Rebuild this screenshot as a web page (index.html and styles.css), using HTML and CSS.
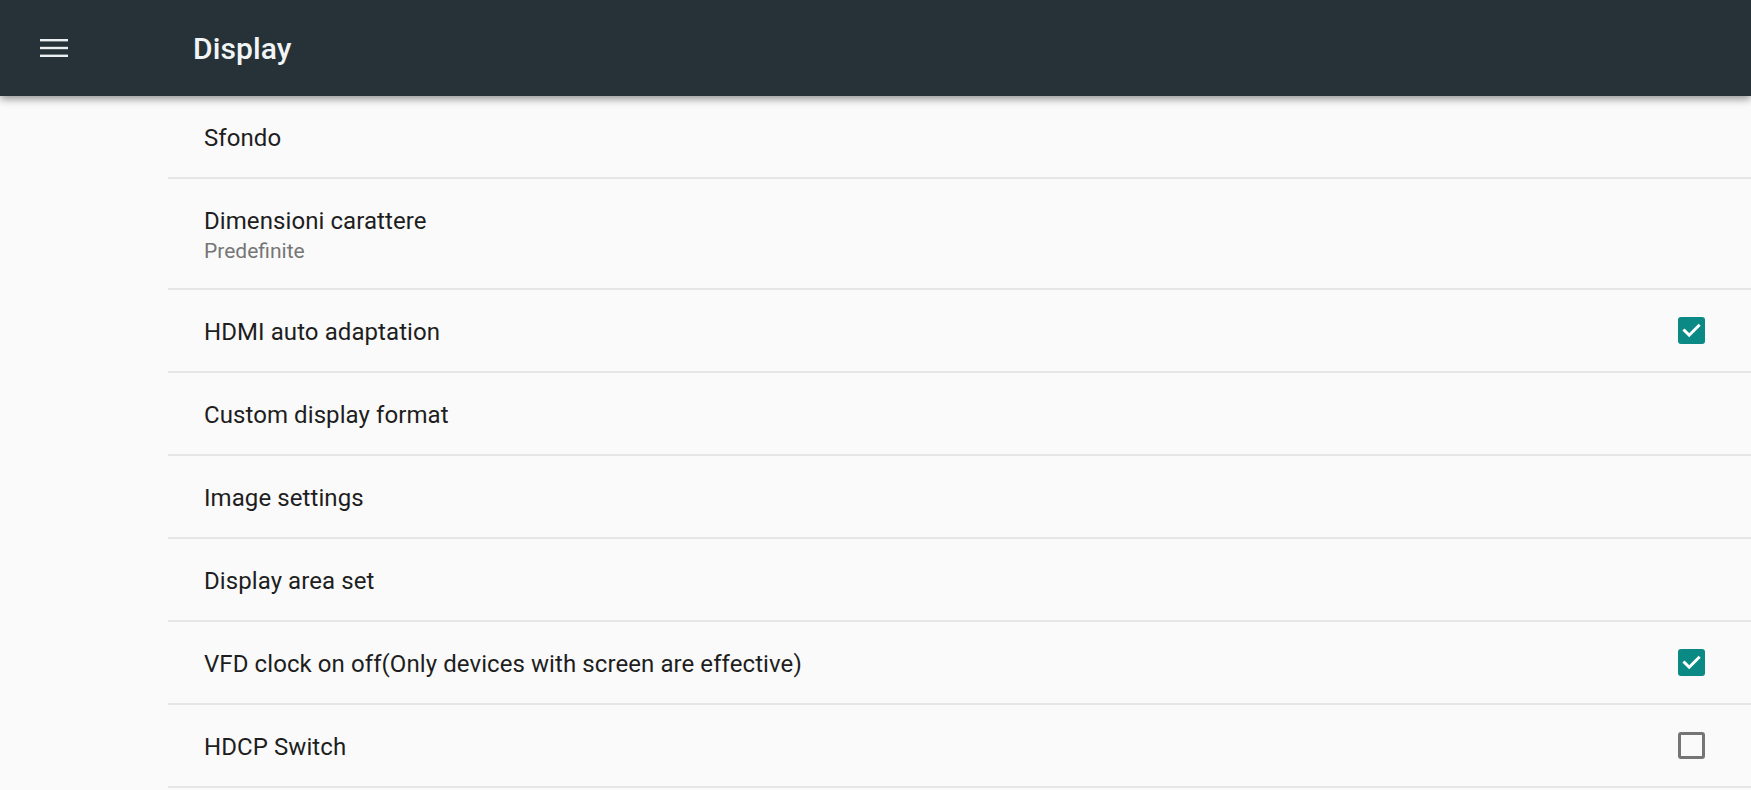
FILE: index.html
```html
<!DOCTYPE html>
<html lang="it">
<head>
<meta charset="utf-8">
<title>Display</title>
<link rel="stylesheet" href="styles.css">
</head>
<body>
<header class="appbar">
  <div class="menu-btn">
    <svg width="28" height="18" viewBox="0 0 28 18"><rect x="0" y="0" width="28" height="2.4" fill="#eceff1"/><rect x="0" y="7.8" width="28" height="2.4" fill="#eceff1"/><rect x="0" y="15.6" width="28" height="2.4" fill="#eceff1"/></svg>
  </div>
  <h1 class="title">Display</h1>
</header>
<main class="list">
  <div class="row row-first"><div class="texts"><div class="primary">Sfondo</div></div></div>
  <div class="row row-two"><div class="texts"><div class="primary">Dimensioni carattere</div><div class="secondary">Predefinite</div></div></div>
  <div class="row"><div class="texts"><div class="primary">HDMI auto adaptation</div></div><span class="cb checked"><svg width="27" height="27" viewBox="0 0 27 27"><path d="M6.5 13.5 L11.2 18.2 L20.6 8.8" fill="none" stroke="#fff" stroke-width="3" stroke-linecap="square"/></svg></span></div>
  <div class="row"><div class="texts"><div class="primary">Custom display format</div></div></div>
  <div class="row"><div class="texts"><div class="primary">Image settings</div></div></div>
  <div class="row"><div class="texts"><div class="primary">Display area set</div></div></div>
  <div class="row"><div class="texts"><div class="primary">VFD clock on off(Only devices with screen are effective)</div></div><span class="cb checked"><svg width="27" height="27" viewBox="0 0 27 27"><path d="M6.5 13.5 L11.2 18.2 L20.6 8.8" fill="none" stroke="#fff" stroke-width="3" stroke-linecap="square"/></svg></span></div>
  <div class="row"><div class="texts"><div class="primary">HDCP Switch</div></div><span class="cb"></span></div>
</main>
</body>
</html>
```
FILE: styles.css
```css
html, body {
  margin: 0;
  padding: 0;
  background: #fafafa;
  font-family: Roboto, "Noto Sans", "Liberation Sans", sans-serif;
  overflow: hidden;
}
.appbar {
  position: relative;
  z-index: 2;
  height: 96px;
  background: #263238;
  display: flex;
  align-items: center;
  box-shadow: 0 3px 8px rgba(0,0,0,0.42);
}
.menu-btn {
  width: 28px;
  height: 18px;
  margin-left: 40px;
  margin-top: -1px;
  display: flex;
}
.title {
  margin: 0 0 0 125px;
  color: #f2f5f6;
  font-size: 30px;
  font-weight: 500;
  letter-spacing: 0.1px;
}
.list {
  padding-left: 168px;
}
.row {
  height: 81px;
  border-bottom: 2px solid #e6e6e6;
  display: flex;
  align-items: center;
  padding: 0 46px 0 36px;
}
.row-two {
  height: 109px;
}
.texts {
  flex: 1;
  padding-top: 2px;
}
.primary {
  color: #1e1e1e;
  font-size: 24px;
  line-height: 30px;
  letter-spacing: 0.08px;
}
.secondary {
  color: #767676;
  font-size: 21px;
  line-height: 26px;
  margin-top: 2px;
}
.cb {
  width: 27px;
  height: 27px;
  box-sizing: border-box;
  border: 3px solid #757575;
  border-radius: 3px;
  display: flex;
  align-items: center;
  justify-content: center;
}
.cb.checked {
  background: #0a8985;
  border: none;
}
```
